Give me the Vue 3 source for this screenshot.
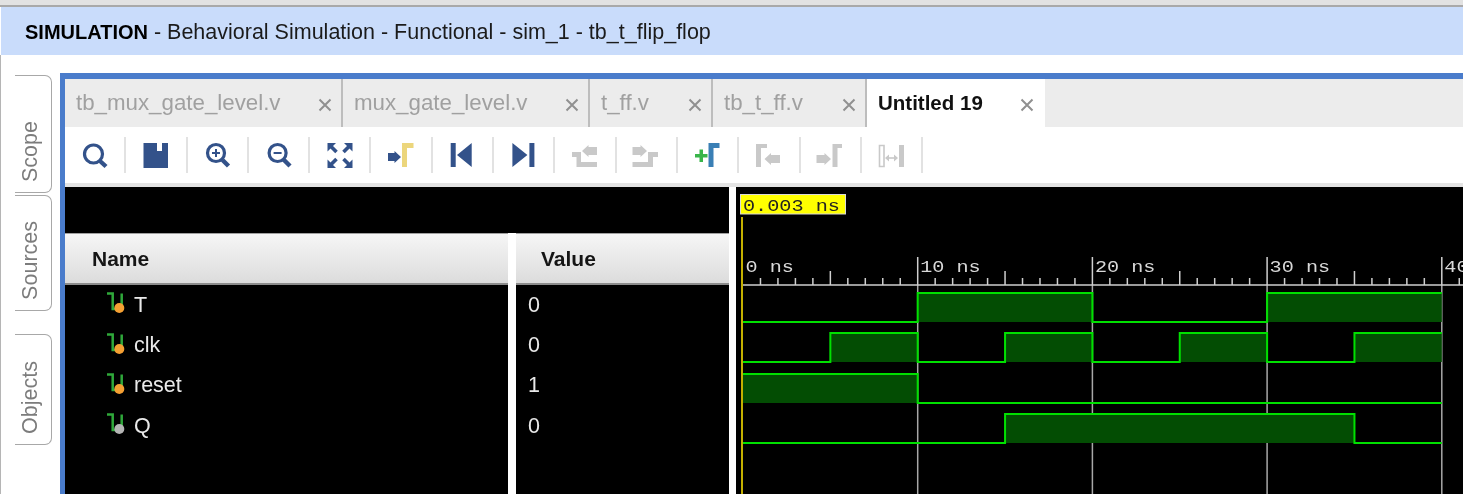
<template>
  <div class="app">
    <div class="top-strip"></div>
    <div class="title-bar"><b>SIMULATION</b> - Behavioral Simulation - Functional - sim_1 - tb_t_flip_flop</div>

    <div class="body">
      <div class="side-tabs">
        <div class="side-tab scope"><span>Scope</span></div>
        <div class="side-tab sources"><span>Sources</span></div>
        <div class="side-tab objects"><span>Objects</span></div>
      </div>

      <div class="panel">
        <div class="tabs">
          <div v-for="tab in tabs" :key="tab.name" class="tab" :class="{ active: tab.active }" :style="{ width: tab.width + 'px' }">
            <span class="tab-name">{{ tab.name }}</span>
            <svg class="tab-close" width="14" height="14" viewBox="0 0 14 14">
              <path d="M1.5 1.5 12.5 12.5M12.5 1.5 1.5 12.5" />
            </svg>
          </div>
        </div>

        <div class="toolbar">
          <!-- zoom fit -->
          <button class="tool"><svg viewBox="0 0 30 30" class="navy">
            <circle cx="13.5" cy="14" r="9" class="line" />
            <path d="M20 21 26 26.5" class="line thick" />
          </svg></button>
          <!-- save -->
          <button class="tool"><svg viewBox="0 0 30 30" class="navy">
            <path class="fill" d="M2.5 3H16V11H21V3H27V28H2.5Z" />
          </svg></button>
          <!-- zoom in -->
          <button class="tool"><svg viewBox="0 0 30 30" class="navy">
            <circle cx="14" cy="13" r="8.5" class="line" />
            <path d="M20.5 20 26.5 26" class="line thick" />
            <path d="M10 13H18M14 9V17" class="line thin" />
          </svg></button>
          <!-- zoom out -->
          <button class="tool"><svg viewBox="0 0 30 30" class="navy">
            <circle cx="13.6" cy="13" r="8.5" class="line" />
            <path d="M20 20 26 26" class="line thick" />
            <path d="M9.6 13H17.6" class="line thin" />
          </svg></button>
          <!-- full view -->
          <button class="tool"><svg viewBox="0 0 30 30" class="navy">
            <path class="fill" d="M2.5 3H11L2.5 11.5Z" />
            <path class="fill" d="M27.5 3H19L27.5 11.5Z" />
            <path class="fill" d="M2.5 28H11L2.5 19.5Z" />
            <path class="fill" d="M27.5 28H19L27.5 19.5Z" />
            <path class="line arm" d="M5 5.5 11.5 12M25 5.5 18.5 12M5 25.5 11.5 19M25 25.5 18.5 19" />
          </svg></button>
          <!-- go to marker -->
          <button class="tool"><svg viewBox="0 0 30 30" class="navy">
            <path class="fill" d="M2 13H8.5V11L15 17 8.5 23V21H2Z" />
            <path class="gold" d="M16 3H27.5V8H21V27H16Z" />
          </svg></button>
          <!-- go to time 0 -->
          <button class="tool"><svg viewBox="0 0 30 30" class="navy">
            <path class="fill" d="M3.7 3H8.7V27H3.7ZM24.7 3V27L10 15Z" />
          </svg></button>
          <!-- go to last time -->
          <button class="tool"><svg viewBox="0 0 30 30" class="navy">
            <path class="fill" d="M3.4 3V27L18.4 15ZM20.4 3H25.4V27H20.4Z" />
          </svg></button>
          <!-- previous transition -->
          <button class="tool"><svg viewBox="0 0 30 30" class="grey">
            <path class="fill" d="M2 12H11V22H27V27H6.5V17H2Z" />
            <path class="fill" d="M12 11 18.5 5V7H27V15H18.5V17Z" />
          </svg></button>
          <!-- next transition -->
          <button class="tool"><svg viewBox="0 0 30 30" class="grey">
            <path class="fill" d="M1.5 22H17V12H27V17H22V27H1.5Z" />
            <path class="fill" d="M1.5 7H9.5V5L16 11 9.5 17V15H1.5Z" />
          </svg></button>
          <!-- add marker -->
          <button class="tool"><svg viewBox="0 0 30 30">
            <path class="plus" d="M2 14H6.5V9.5H10V14H14.5V17.5H10V22H6.5V17.5H2Z" />
            <path class="steel" d="M15.5 3H26.5V8H20.5V27H15.5Z" />
          </svg></button>
          <!-- previous marker -->
          <button class="tool"><svg viewBox="0 0 30 30" class="grey">
            <path class="fill" d="M2 4H13V8H7V27H2Z" />
            <path class="fill" d="M10.5 19 17 13V15H26V23H17V25Z" />
          </svg></button>
          <!-- next marker -->
          <button class="tool"><svg viewBox="0 0 30 30" class="grey">
            <path class="fill" d="M1.5 15H9.5V13L16 19 9.5 25V23H1.5Z" />
            <path class="fill" d="M17.5 4H27V8H22.5V27H17.5Z" />
          </svg></button>
          <!-- swap markers -->
          <button class="tool"><svg viewBox="0 0 30 30" class="grey">
            <path d="M2.5 5.5H7V26.5H2.5Z" class="line outline" />
            <path class="fill" d="M22 5H27V27H22Z" />
            <path d="M9 18H20" class="line outline" />
            <path class="fill" d="M8 18 12 14.5V21.5ZM21 18 17 14.5V21.5Z" />
          </svg></button>
        </div>

        <div class="wave-pane">
          <div class="signals">
            <div class="signals-top"></div>
            <div class="col-head name-head">Name</div>
            <div class="col-gap"></div>
            <div class="col-head value-head">Value</div>
            <div class="name-col">
              <div v-for="s in signals" :key="s.name" class="row">
                <svg class="sig-icon" width="20" height="24" viewBox="0 0 20 24">
                  <path d="M1 1.5H6.7V17H12M15.7 1.5V13" fill="none" stroke="#2fa83a" stroke-width="2.5" />
                  <circle cx="13.3" cy="16" r="5" :fill="s.dot" />
                </svg>
                <span>{{ s.name }}</span>
              </div>
            </div>
            <div class="col-gap"></div>
            <div class="value-col">
              <div v-for="s in signals" :key="s.name" class="row value">{{ s.value }}</div>
            </div>
          </div>

          <div class="splitter"></div>

          <svg class="waves" width="727" height="307" viewBox="0 0 727 307">
            <line v-for="g in gridLines" :key="g.x" :x1="g.x" :x2="g.x" y1="98" y2="307" class="grid" />
            <line x1="7" x2="727" y1="98" y2="98" class="ruler" />
            <line v-for="t in ticks" :key="t.x" :x1="t.x" :x2="t.x" :y1="t.top" y2="98" class="ruler" />
            <text v-for="g in labels" :key="'l' + g.x" :x="g.x + 2.5" y="85" class="ruler-text" :textLength="g.label.length * 12.1" lengthAdjust="spacingAndGlyphs">{{ g.label }}</text>

            <g v-for="w in waves" :key="w.name">
              <rect v-for="h in w.highs" :key="h.x" :x="h.x" :y="w.high" :width="h.w" :height="w.low - w.high" class="wave-fill" />
              <path :d="w.path" class="wave-line" />
            </g>

            <line x1="6" x2="6" y1="30" y2="307" class="cursor" />
            <rect x="4.5" y="7.5" width="105" height="19.5" class="marker" />
            <text x="7" y="24" class="marker-text" textLength="97" lengthAdjust="spacingAndGlyphs">0.003 ns</text>
          </svg>
        </div>
      </div>
    </div>
  </div>
</template>

<script setup>
const tabs = [
  { name: 'tb_mux_gate_level.v', width: 278 },
  { name: 'mux_gate_level.v', width: 247 },
  { name: 't_ff.v', width: 123 },
  { name: 'tb_t_ff.v', width: 154 },
  { name: 'Untitled 19', width: 178, active: true }
]

const signals = [
  { name: 'T', value: 0, dot: '#f5a033' },
  { name: 'clk', value: 0, dot: '#f5a033' },
  { name: 'reset', value: 1, dot: '#f5a033' },
  { name: 'Q', value: 0, dot: '#b5b5b5' }
]

// waveform scale: 1 ns = 17.47 px, time zero at x = 7
const nsToX = (ns) => 7 + ns * 17.47

const labels = [0, 10, 20, 30, 40].map((ns) => ({ x: nsToX(ns), label: ns + ' ns' }))
const gridLines = [10, 20, 30, 40].map((ns) => ({ x: nsToX(ns) }))

const ticks = []
for (let ns = 1; ns <= 41; ns++) {
  const top = ns % 10 === 0 ? 70 : ns % 5 === 0 ? 84 : 91
  ticks.push({ x: nsToX(ns), top })
}

// each wave: start level plus the times at which it toggles, ending at 40 ns
const buildWave = (name, high, start, edges) => {
  const low = high + 29
  const times = [0, ...edges, 40]
  const highs = []
  let level = start
  let path = `M${nsToX(0)} ${level ? high : low}`
  for (let i = 1; i < times.length; i++) {
    const x = nsToX(times[i])
    const y = level ? high : low
    path += `L${x} ${y}`
    if (level) highs.push({ x: nsToX(times[i - 1]), w: x - nsToX(times[i - 1]) })
    level = level ? 0 : 1
    if (i < times.length - 1) path += `L${x} ${level ? high : low}`
  }
  return { name, high, low, highs, path }
}

const waves = [
  buildWave('T', 106, 0, [10, 20, 30]),
  buildWave('clk', 146, 0, [5, 10, 15, 20, 25, 30, 35]),
  buildWave('reset', 187, 1, [10]),
  buildWave('Q', 227, 0, [15, 35])
]
</script>

<style>
html, body {
  margin: 0;
  background: #fff;
  overflow: hidden;
}
</style>

<style scoped>
.app {
  width: 1463px;
  height: 494px;
  overflow: hidden;
  background: #fff;
  font-family: "Liberation Sans", Arial, sans-serif;
  display: flex;
  flex-direction: column;
  filter: blur(0.6px);
}

.top-strip {
  height: 5px;
  background: #e2e2e2;
  border-bottom: 2px solid #a9a9a9;
  flex: none;
}

.title-bar {
  height: 48px;
  flex: none;
  margin-left: 1px;
  padding-left: 24px;
  background: #c9dcfb;
  color: #1b1b1b;
  font-size: 21.5px;
  line-height: 51px;
  white-space: nowrap;
}

.title-bar b {
  color: #000;
  font-size: 20px;
}

.body {
  flex: 1;
  display: flex;
  min-height: 0;
  border-left: 1px solid #b5b5b5;
}

.side-tabs {
  width: 59px;
  flex: none;
  display: flex;
  flex-direction: column;
  padding: 20px 0 0 14px;
  box-sizing: border-box;
}

.side-tab {
  width: 37px;
  box-sizing: border-box;
  border: 1.5px solid #a8a8a8;
  border-left: none;
  border-radius: 0 7px 7px 0;
  padding: 0 6px 10px 0;
  display: flex;
  justify-content: center;
  color: #7c7c7c;
  font-size: 21.5px;
}

.side-tab span {
  writing-mode: vertical-rl;
  transform: rotate(180deg);
  line-height: 22px;
}

.side-tab.scope {
  height: 118px;
  align-items: flex-end;
}

.side-tab.sources {
  height: 116px;
  margin-top: 2px;
  align-items: flex-end;
}

.side-tab.objects {
  height: 111px;
  margin-top: 23px;
  align-items: flex-end;
}

.panel {
  flex: 1;
  min-width: 0;
  margin-top: 18px;
  border-left: 5px solid #4a7ccb;
  border-top: 6px solid #4a7ccb;
  display: flex;
  flex-direction: column;
}

.tabs {
  height: 48px;
  flex: none;
  display: flex;
  background: #ececec;
}

.tab {
  box-sizing: border-box;
  display: flex;
  align-items: center;
  justify-content: space-between;
  padding: 0 9px 0 11px;
  border-right: 2px solid #bdbdbd;
  color: #a0a0a0;
  font-size: 22.3px;
  white-space: nowrap;
}

.tab.active {
  background: #fff;
  color: #111;
  font-size: 20.5px;
  font-weight: bold;
  border-right: none;
  padding-right: 11px;
}

.tab-close {
  flex: none;
  margin-top: 4px;
}

.tab-close path {
  fill: none;
  stroke: #909090;
  stroke-width: 2;
}

.toolbar {
  height: 56px;
  flex: none;
  display: flex;
  align-items: center;
  background: #fff;
}

.tool {
  width: 61.3px;
  height: 36px;
  flex: none;
  box-sizing: border-box;
  padding: 0;
  border: none;
  border-right: 2px solid #e2e2e2;
  background: none;
  display: flex;
  align-items: center;
  justify-content: center;
}

.tool svg {
  width: 30px;
  height: 30px;
  display: block;
}

.navy .fill {
  fill: #33528a;
}

.navy .line {
  fill: none;
  stroke: #33528a;
  stroke-width: 3.2;
}

.navy .line.thick {
  stroke-width: 4.4;
}

.navy .line.thin {
  stroke-width: 2;
}

.navy .line.arm {
  stroke-width: 3.6;
}

.navy .gold {
  fill: #ecd67c;
}

.grey .fill {
  fill: #c9c9c9;
}

.grey .line {
  fill: none;
  stroke: #c9c9c9;
}

.grey .outline {
  stroke-width: 1.6;
}

.plus {
  fill: #39b54a;
}

.steel {
  fill: #3a7fb5;
}

.wave-pane {
  flex: 1;
  min-height: 0;
  display: flex;
  background: #000;
  border-top: 4px solid #e4e4e4;
}

.signals {
  width: 664px;
  flex: none;
  display: grid;
  grid-template-columns: 443px 8px 213px;
  grid-template-rows: 46px 52px 1fr;
  align-content: start;
}

.signals-top {
  grid-column: 1 / 4;
}

.col-head {
  box-sizing: border-box;
  background: linear-gradient(#f6f6f6, #dcdcdc);
  border-top: 1px solid #a0a0a0;
  border-bottom: 2px solid #8c8c8c;
  color: #151515;
  font-size: 21px;
  font-weight: bold;
  line-height: 50px;
}

.name-head {
  padding-left: 27px;
}

.value-head {
  padding-left: 25px;
}

.col-gap {
  background: #fff;
}

.row {
  height: 40.4px;
  display: flex;
  align-items: center;
  color: #e9e9e9;
  font-size: 21.5px;
}

.name-col .row {
  padding-left: 41px;
  gap: 8px;
}

.sig-icon {
  flex: none;
  margin-top: -2px;
}

.value {
  padding-left: 12px;
}

.splitter {
  width: 7px;
  flex: none;
  background: #fff;
}

.waves {
  display: block;
  flex: none;
}

.grid {
  stroke: #a8a8a8;
  stroke-width: 1.5;
}

.ruler {
  stroke: #cfcfcf;
  stroke-width: 1.5;
}

.ruler-text {
  font-family: "Liberation Mono", monospace;
  font-size: 17px;
  fill: #d8d8d8;
}

.wave-fill {
  fill: #034d03;
}

.wave-line {
  fill: none;
  stroke: #00e000;
  stroke-width: 2;
}

.cursor {
  stroke: #c4b000;
  stroke-width: 2;
}

.marker {
  fill: #ffff00;
  stroke: #d8d8d8;
  stroke-width: 1;
}

.marker-text {
  font-family: "Liberation Mono", monospace;
  font-size: 17px;
  fill: #222;
}
</style>
